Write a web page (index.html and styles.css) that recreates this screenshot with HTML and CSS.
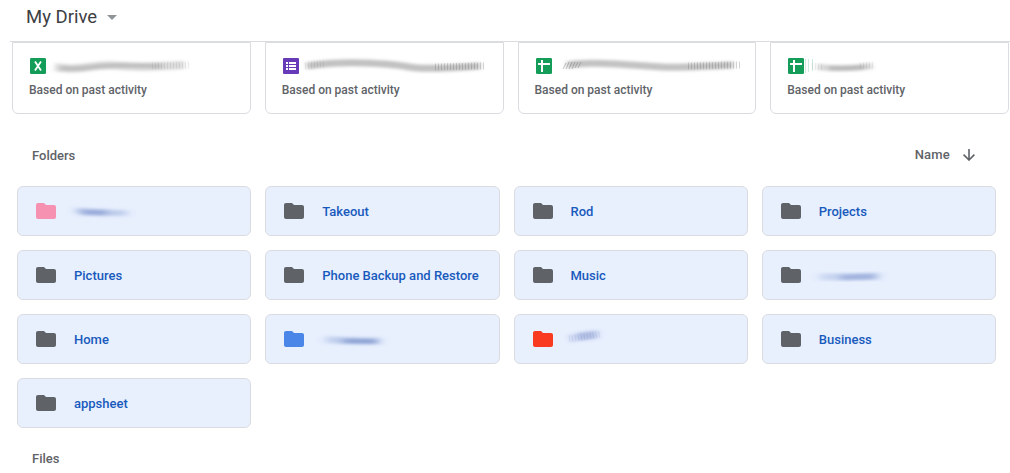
FILE: index.html
```
<!DOCTYPE html>
<html lang="en">
<head>
<meta charset="utf-8">
<title>My Drive</title>
<link rel="stylesheet" href="styles.css">
</head>
<body>
<svg class="defs" aria-hidden="true">
  <defs>
    <filter id="soft" x="-20%" y="-200%" width="140%" height="500%"><feGaussianBlur stdDeviation="2.5 1.5"/></filter>
    <filter id="softer" x="-30%" y="-300%" width="160%" height="700%"><feGaussianBlur stdDeviation="5 1.4"/></filter>
    <symbol id="folder" viewBox="0 0 20 16"><path d="M8 0H2C.9 0 0 .9 0 2v12c0 1.1.9 2 2 2h16c1.1 0 2-.9 2-2V4c0-1.100-.9-2-2-2h-8z"/></symbol>
    <symbol id="sheet" viewBox="0 0 16 16"><rect width="16" height="16" rx="1.300" fill="#149d58"/><path d="M2 5h12v2H7v7H5V7H2zM5 2h2v4H5z" fill="#fff"/></symbol>
  </defs>
</svg>
<header class="header">
  <h1 class="title">My Drive</h1>
  <svg class="caret" viewBox="0 0 10 5"><path d="M0 0h10L5 5z"/></svg>
</header>
<main>
  <section class="suggestions">
    <article class="card">
      <div class="card-name">
        <svg class="icon" viewBox="0 0 16 16"><rect width="16" height="16" rx="1.300" fill="#149d58"/><path d="M5 3.500l6 9M11 3.500l-6 9" stroke="#fff" stroke-width="1.800"/></svg>
        <svg class="smudge" viewBox="0 0 190 24"><g filter="url(#soft)" fill="none" stroke="#777"><path d="M9 13Q24 16 42 13T76 12T138 11" stroke-width="8" opacity=".27"/><path d="M14 14Q30 16 48 13T116 12" stroke-width="5" opacity=".26"/></g><path d="M106 12l38-1" class="ticks faint"/></svg>
      </div>
      <p class="reason">Based on past activity</p>
    </article>
    <article class="card">
      <div class="card-name">
        <svg class="icon" viewBox="0 0 16 16"><rect width="16" height="16" rx="1" fill="#673ab7"/><path d="M3 4h2v2H3zM6 4h7v2H6zM3 7h2v2H3zM6 7h7v2H6zM3 10h2v2H3zM6 10h7v2H6z" fill="#fff"/></svg>
        <svg class="smudge" viewBox="0 0 190 24"><g filter="url(#soft)" fill="none" stroke="#777"><path d="M8 12Q35 8 65 9T110 13T181 12" stroke-width="7" opacity=".46"/></g><path d="M6 12l20-2" class="ticks faint"/><path d="M136 13l51-1" class="ticks"/></svg>
      </div>
      <p class="reason">Based on past activity</p>
    </article>
    <article class="card">
      <div class="card-name">
        <svg class="icon"><use href="#sheet"/></svg>
        <svg class="smudge" viewBox="0 0 190 24"><g filter="url(#soft)" fill="none" stroke="#777"><path d="M15 11Q32 8 64 10T110 13T181 11" stroke-width="7" opacity=".44"/></g><path d="M11 15l3-6M14 15l3-7M17 15l3-7M20 15l3-7M23 14l3-6M26 14l3-6" stroke="#777" opacity=".45"/><path d="M136 12l52-1" class="ticks"/></svg>
      </div>
      <p class="reason">Based on past activity</p>
    </article>
    <article class="card">
      <div class="card-name">
        <svg class="icon"><use href="#sheet"/></svg>
        <svg class="smudge" viewBox="0 0 190 24"><path d="M1.500 5v14M4.500 5v13M8.500 5v12" stroke="#149d58" opacity=".2"/><g filter="url(#soft)" fill="none" stroke="#777"><path d="M14 13Q40 16 68 12" stroke-width="6" opacity=".3"/><path d="M25 14Q42 15 60 13" stroke-width="5" opacity=".3"/></g><path d="M8 12l10 1M56 12l14-1" class="ticks faint"/></svg>
      </div>
      <p class="reason">Based on past activity</p>
    </article>
  </section>
  <div class="folders-bar">
    <h2 class="section-title">Folders</h2>
    <div class="sort"><span>Name</span><svg class="arrow" viewBox="0 0 12 12"><path d="M6 0v11M.6 5.600L6 11l5.400-5.400"/></svg></div>
  </div>
  <section class="folders">
    <div class="folder"><svg class="folder-icon pink"><use href="#folder"/></svg><svg class="folder-smudge" viewBox="0 0 90 24"><g filter="url(#softer)" fill="none" stroke="#4d6db8"><path d="M11 11Q25 14 62 14" stroke-width="6" opacity=".26"/><path d="M16 13.500h26" stroke-width="6" opacity=".34"/></g></svg></div>
    <div class="folder"><svg class="folder-icon"><use href="#folder"/></svg><span>Takeout</span></div>
    <div class="folder"><svg class="folder-icon"><use href="#folder"/></svg><span>Rod</span></div>
    <div class="folder"><svg class="folder-icon"><use href="#folder"/></svg><span>Projects</span></div>
    <div class="folder"><svg class="folder-icon"><use href="#folder"/></svg><span>Pictures</span></div>
    <div class="folder"><svg class="folder-icon"><use href="#folder"/></svg><span>Phone Backup and Restore</span></div>
    <div class="folder"><svg class="folder-icon"><use href="#folder"/></svg><span>Music</span></div>
    <div class="folder"><svg class="folder-icon"><use href="#folder"/></svg><svg class="folder-smudge" viewBox="0 0 90 24"><g filter="url(#softer)" fill="none" stroke="#4d6db8"><path d="M10 14Q40 14 70 13" stroke-width="7" opacity=".2"/><path d="M30 14.500l35-1" stroke-width="6" opacity=".32"/></g></svg></div>
    <div class="folder"><svg class="folder-icon"><use href="#folder"/></svg><span>Home</span></div>
    <div class="folder"><svg class="folder-icon blue"><use href="#folder"/></svg><svg class="folder-smudge" viewBox="0 0 90 24"><g filter="url(#softer)" fill="none" stroke="#4d6db8"><path d="M13 12.500Q34 14 67 14" stroke-width="7" opacity=".24"/><path d="M30 14l34 .5" stroke-width="5" opacity=".44"/></g></svg></div>
    <div class="folder"><svg class="folder-icon red"><use href="#folder"/></svg><svg class="folder-smudge" viewBox="0 0 90 24"><g filter="url(#soft)" fill="none" stroke="#5268b5"><path d="M7 12Q20 8 38 7" stroke-width="8" opacity=".17"/><path d="M16 10l17-2" stroke-width="8" opacity=".24"/></g><path d="M7 12l32-5" class="ticks tint"/></svg></div>
    <div class="folder"><svg class="folder-icon"><use href="#folder"/></svg><span>Business</span></div>
    <div class="folder"><svg class="folder-icon"><use href="#folder"/></svg><span>appsheet</span></div>
  </section>
  <h2 class="section-title files-title">Files</h2>
</main>
</body>
</html>
```
FILE: styles.css
```
* { box-sizing: border-box; }
body { margin: 0; height: 473px; overflow: hidden; background: #fff; color: #5f6368; font: 500 13px/20px Roboto, sans-serif; }
svg { display: block; flex: none; }
h1, h2, p { margin: 0; }
.defs { position: absolute; width: 0; height: 0; }
.header { height: 42px; margin-left: 10px; padding: 0 0 7px 16px; display: flex; align-items: center; gap: 10px; border-bottom: 1px solid #dadce0; }
.title { color: #3c4043; font-size: 18.5px; line-height: 24px; font-weight: 400; }
.caret { width: 10px; height: 5px; fill: #919497; }
.suggestions { display: grid; grid-template-columns: repeat(4, 1fr); gap: 14px; padding: 0 1px 0 12px; }
.card { height: 72px; padding: 15px 0 0 16px; border: 1px solid #dadce0; border-radius: 0 0 6px 6px; }
.card-name { display: flex; height: 16px; align-items: center; padding-left: 1px; }
.icon { width: 16px; height: 16px; }
.smudge { width: 190px; height: 24px; }
.ticks { fill: none; stroke: #777; stroke-width: 7; stroke-dasharray: 1 2; opacity: .32; }
.ticks.faint { opacity: .14; }
.ticks.tint { stroke: #5268b5; opacity: .11; }
.reason { margin-top: 6px; font-size: 12px; line-height: 20px; }
.folders-bar { height: 72px; padding: 10px 35px 0 32px; display: flex; justify-content: space-between; align-items: center; }
.section-title { font-size: 13px; line-height: 20px; font-weight: 500; }
.folders-bar .section-title { padding-top: 2px; }
.sort { display: flex; align-items: center; gap: 13px; margin-top: -1px; letter-spacing: .2px; }
.arrow { width: 12px; height: 12px; fill: none; stroke: #5f6368; stroke-width: 1.6; }
.folders { display: grid; grid-template-columns: repeat(4, 1fr); gap: 14px; padding: 0 14px 0 17px; }
.folder { height: 50px; padding-left: 18px; display: flex; align-items: center; gap: 18px; background: #e8f0fe; border: 1px solid #dadce0; border-radius: 6px; color: #185abc; white-space: nowrap; }
.folder span { padding-top: 2px; }
.folder-icon { width: 20px; height: 16px; fill: #5f6368; }
.folder-icon.pink { fill: #f691b2; }
.folder-icon.blue { fill: #4986e7; }
.folder-icon.red { fill: #fa3a20; }
.folder-smudge { width: 90px; height: 24px; margin-left: -9px; }
.files-title { margin: 21px 0 0 32px; }
```
